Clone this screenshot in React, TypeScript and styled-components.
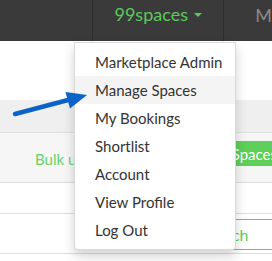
import styled, { createGlobalStyle } from 'styled-components';

const GlobalStyle = createGlobalStyle`
  html, body {
    margin: 0;
    padding: 0;
    background: #ffffff;
  }
  body {
    font-family: Lato, 'Open Sans', 'Liberation Sans', sans-serif;
  }
`;

const menuItems = [
  'Marketplace Admin',
  'Manage Spaces',
  'My Bookings',
  'Shortlist',
  'Account',
  'View Profile',
  'Log Out',
];

const Arrow = () => (
  <ArrowSvg width="100" height="130" viewBox="0 0 100 130">
    <line x1="15" y1="114" x2="70" y2="99.5" stroke="#0b63c9" strokeWidth="4.5" strokeLinecap="round" />
    <polygon points="87,95 65.5,92 70,108.5" fill="#0b63c9" />
  </ArrowSvg>
);

const App = () => {
  return (
    <>
      <GlobalStyle />
      <Page>
        <Navbar>
          <NavSpacer />
          <Brand>
            99spaces <Caret />
          </Brand>
          <NavItem>M</NavItem>
        </Navbar>
        <Hero />
        <Tabs />
        <ActionRow>
          <TextLink>Bulk upload spaces</TextLink>
          <AddButton>+ Add Spaces</AddButton>
        </ActionRow>
        <TableRow height={30} />
        <TableRow height={39}>
          <SearchButton>Search</SearchButton>
        </TableRow>

        <Dropdown>
          {menuItems.map((item, i) => (
            <MenuItem key={item} active={i === 1}>
              {item}
            </MenuItem>
          ))}
        </Dropdown>
        <Arrow />
      </Page>
    </>
  );
};

const Page = styled.div`
  position: relative;
  width: 272px;
  height: 261px;
  overflow: hidden;
  background: #ffffff;
`;

const Navbar = styled.div`
  display: flex;
  height: 41px;
  background: #3a3a3a;
`;

const NavSpacer = styled.div`
  width: 97px;
  border-right: 1px solid #2d2d2d;
`;

const Brand = styled.div`
  width: 138px;
  display: flex;
  align-items: center;
  justify-content: center;
  gap: 6px;
  color: #5bc95b;
  font-size: 18px;
  border-right: 1px solid #2d2d2d;
  padding-bottom: 14px;
  box-sizing: border-box;
`;

const Caret = styled.span`
  width: 0;
  height: 0;
  border-left: 4px solid transparent;
  border-right: 4px solid transparent;
  border-top: 4px solid #5bc95b;
  margin-top: 2px;
`;

const NavItem = styled.div`
  padding: 4px 0 0 31px;
  color: #8a8a8a;
  font-size: 18px;
`;

const Hero = styled.div`
  height: 59px;
`;

const Tabs = styled.div`
  height: 32px;
  background: #efefef;
  border-bottom: 1px solid #dddddd;
`;

const ActionRow = styled.div`
  height: 49px;
  display: flex;
  align-items: center;
  justify-content: space-between;
  padding-left: 35px;
  background: #f6f6f6;
  border-bottom: 1px solid #dddddd;
`;

const TextLink = styled.span`
  color: #66d466;
  font-size: 15px;
  margin-top: 2px;
`;

const AddButton = styled.div`
  height: 25px;
  display: flex;
  align-items: center;
  padding: 0 10px;
  margin-right: -15px;
  margin-top: -8px;
  background: #5dcf5a;
  color: #ffffff;
  font-size: 15px;
  font-weight: 400;
  white-space: nowrap;
`;

const TableRow = styled.div<{ height: number }>`
  height: ${(p) => p.height}px;
  display: flex;
  justify-content: flex-end;
  align-items: flex-start;
  border-bottom: 1px solid #dddddd;
`;

const SearchButton = styled.div`
  width: 138px;
  height: 31px;
  margin-top: 5px;
  margin-right: -22px;
  border: 1px solid #5dcf5a;
  box-sizing: border-box;
  display: flex;
  align-items: center;
  justify-content: center;
  color: #5dcf5a;
  font-size: 16px;
`;

const Dropdown = styled.div`
  position: absolute;
  left: 74px;
  top: 42px;
  width: 162px;
  padding: 5px 0;
  box-sizing: border-box;
  background: #ffffff;
  border: 1px solid rgba(0, 0, 0, 0.15);
  border-radius: 0 0 4px 4px;
  box-shadow: 0 6px 12px rgba(0, 0, 0, 0.175);
`;

const MenuItem = styled.div<{ active?: boolean }>`
  height: 28px;
  line-height: 28px;
  padding: 0 20px;
  font-size: 15px;
  color: #333333;
  white-space: nowrap;
  background: ${(p) => (p.active ? '#f4f4f4' : 'transparent')};
`;

const ArrowSvg = styled.svg`
  position: absolute;
  left: 0;
  top: 0;
`;

export default App;
